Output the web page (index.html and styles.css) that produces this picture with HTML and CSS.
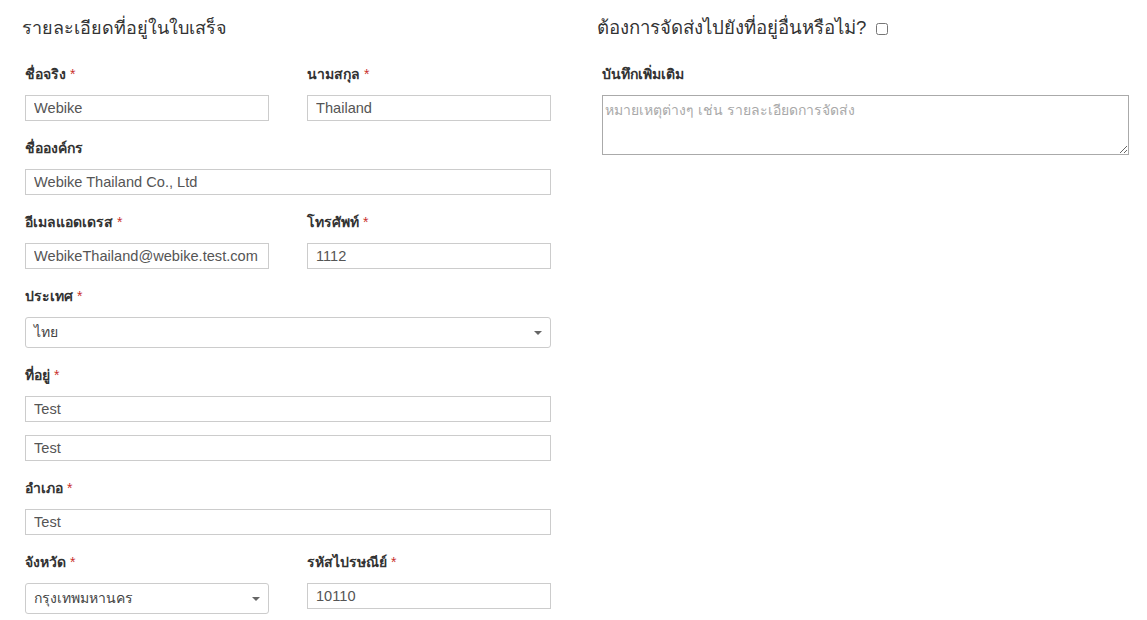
FILE: index.html
```html
<!DOCTYPE html>
<html lang="th">
<head>
    <meta charset="UTF-8">
    <meta name="viewport" content="width=device-width, initial-scale=1.0">
    <title>Checkout Address</title>
    <link rel="stylesheet" href="styles.css">
</head>
<body>
    <div class="page">
        <div class="col-left">
            <h3 class="section-title">รายละเอียดที่อยู่ในใบเสร็จ</h3>
            <div class="row">
                <div class="form-group half">
                    <label>ชื่อจริง <span class="req">*</span></label>
                    <input type="text" value="Webike">
                </div>
                <div class="form-group half">
                    <label>นามสกุล <span class="req">*</span></label>
                    <input type="text" value="Thailand">
                </div>
            </div>
            <div class="form-group">
                <label>ชื่อองค์กร</label>
                <input type="text" value="Webike Thailand Co., Ltd">
            </div>
            <div class="row">
                <div class="form-group half">
                    <label>อีเมลแอดเดรส <span class="req">*</span></label>
                    <input type="text" value="WebikeThailand@webike.test.com">
                </div>
                <div class="form-group half">
                    <label>โทรศัพท์ <span class="req">*</span></label>
                    <input type="text" value="1112">
                </div>
            </div>
            <div class="form-group">
                <label>ประเทศ <span class="req">*</span></label>
                <div class="select-box">ไทย<span class="caret"></span></div>
            </div>
            <div class="form-group">
                <label>ที่อยู่ <span class="req">*</span></label>
                <input type="text" value="Test" class="stacked">
                <input type="text" value="Test">
            </div>
            <div class="form-group">
                <label>อำเภอ <span class="req">*</span></label>
                <input type="text" value="Test">
            </div>
            <div class="row">
                <div class="form-group half">
                    <label>จังหวัด <span class="req">*</span></label>
                    <div class="select-box">กรุงเทพมหานคร<span class="caret"></span></div>
                </div>
                <div class="form-group half">
                    <label>รหัสไปรษณีย์ <span class="req">*</span></label>
                    <input type="text" value="10110">
                </div>
            </div>
        </div>
        <div class="col-right">
            <h3 class="section-title right">ต้องการจัดส่งไปยังที่อยู่อื่นหรือไม่? <input type="checkbox" class="ship-check"></h3>
            <div class="form-group">
                <label>บันทึกเพิ่มเติม</label>
                <textarea placeholder="หมายเหตุต่างๆ เช่น รายละเอียดการจัดส่ง"></textarea>
            </div>
        </div>
    </div>
</body>
</html>
```

FILE: styles.css
```css
body {
    margin: 0;
    padding: 0;
    background-color: #fff;
    font-family: "Liberation Sans", Arial, sans-serif;
    font-size: 14px;
    color: #333;
}
.page {
    display: flex;
    padding-left: 25px;
    gap: 51px;
}
.col-left {
    width: 526px;
}
.col-right {
    width: 527px;
}
.section-title {
    margin: 16px 0 24px -3px;
    font-size: 18px;
    font-weight: normal;
    line-height: 24px;
    color: #333;
}
.section-title.right {
    margin-left: -5px;
    font-size: 18.6px;
}
.ship-check {
    width: 12px;
    height: 12px;
    margin: 0 0 0 4px;
    vertical-align: -1px;
}
.row {
    display: flex;
    gap: 38px;
}
.form-group {
    display: flex;
    flex-direction: column;
    margin-bottom: 17px;
}
.form-group.half {
    width: 244px;
}
label {
    font-weight: bold;
    height: 20px;
    line-height: 20px;
    margin-bottom: 11px;
    color: #333;
}
.req {
    color: #c9302c;
    font-weight: normal;
}
input[type="text"] {
    box-sizing: border-box;
    height: 26px;
    width: 100%;
    padding: 0 8px;
    border: 1px solid #ccc;
    border-radius: 0;
    font-family: inherit;
    font-size: 14.6px;
    color: #555;
    margin: 0;
}
input.stacked {
    margin-bottom: 13px;
}
.select-box {
    position: relative;
    box-sizing: border-box;
    height: 31px;
    line-height: 29px;
    padding: 0 8px;
    border: 1px solid #ccc;
    border-radius: 3px;
    color: #444;
    font-size: 14px;
}
.caret {
    position: absolute;
    right: 8px;
    top: 13px;
    width: 0;
    height: 0;
    border-left: 4px solid transparent;
    border-right: 4px solid transparent;
    border-top: 4px solid #666;
}
textarea {
    box-sizing: border-box;
    width: 100%;
    height: 60px;
    padding: 3px 2px;
    border: 1px solid #aaa;
    font-family: inherit;
    font-size: 14px;
    color: #555;
    resize: vertical;
    margin: 0;
}
textarea::placeholder {
    color: #a9a9a9;
}
```
